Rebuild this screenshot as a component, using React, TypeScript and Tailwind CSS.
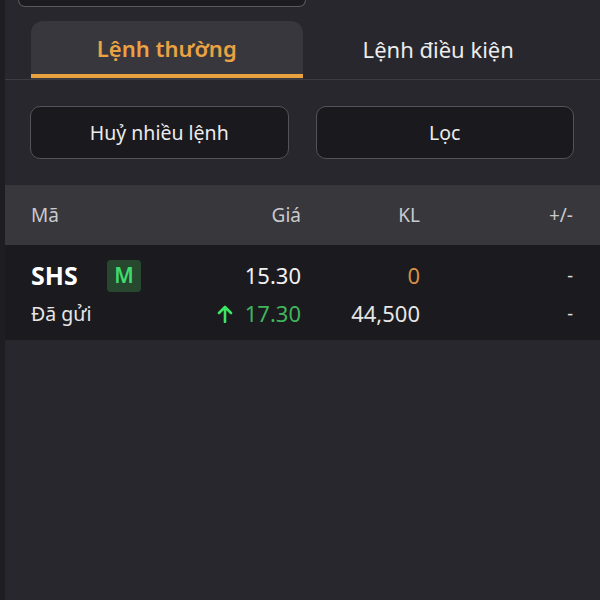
import React from "react";

export default function App() {
  const font = { fontFamily: '"Noto Sans", "Open Sans", sans-serif' };
  return (
    <div className="w-[600px] h-[600px] flex overflow-hidden bg-[#29272e]" style={font}>
      <div className="w-[5px] h-full bg-[#1e1d22]" />
      <div className="flex-1 flex flex-col">
        {/* top partial button */}
        <div className="ml-[13px] w-[288px] h-[7px] border-x border-b border-[#5a595f] rounded-b-[10px] bg-[#1c1b20]" />
        {/* tabs */}
        <div className="mt-[14px] flex border-b border-[#3d3c42] pl-[26px] pr-[26px]">
          <div className="flex-1 h-[58px] flex flex-col bg-[#38373d] rounded-t-[12px]">
            <div className="flex-1 flex items-center justify-center pt-[2px] text-[22px] font-semibold text-[#eaa243]">
              Lệnh thường
            </div>
            <div className="h-[4px] bg-[#e8a23f] mb-[1px]" />
          </div>
          <div className="flex-1 h-[58px] flex items-center justify-center text-[22px] text-[#ececec] pb-[2px]">
            Lệnh điều kiện
          </div>
        </div>
        {/* buttons */}
        <div className="mt-[26px] flex gap-[27px] pl-[25px] pr-[26px]">
          <div className="flex-1 h-[53px] rounded-[10px] border border-[#54535a] bg-[#1a191e] flex items-center justify-center text-[19.5px] text-[#ececec]">
            Huỷ nhiều lệnh
          </div>
          <div className="flex-1 h-[53px] rounded-[10px] border border-[#54535a] bg-[#1a191e] flex items-center justify-center text-[19.5px] text-[#ececec]">
            Lọc
          </div>
        </div>
        {/* header */}
        <div className="mt-[26px] h-[60px] bg-[#38373c] flex items-center text-[19px] text-[#cacace]">
          <div className="pl-[26px] w-[176px]">Mã</div>
          <div className="w-[120px] text-right">Giá</div>
          <div className="w-[119px] text-right">KL</div>
          <div className="w-[153px] text-right">+/-</div>
        </div>
        {/* data row */}
        <div className="h-[95px] bg-[#1b1a1f] flex flex-col justify-center pt-[4px]">
          <div className="flex items-center h-[38px]">
            <div className="pl-[26px] w-[176px] flex items-center">
              <span className="text-[25px] font-bold text-white w-[76px]">SHS</span>
              <span className="w-[34px] h-[32px] rounded-[4px] bg-[#27472f] text-[#3fdc6d] text-[21px] font-semibold flex items-center justify-center">M</span>
            </div>
            <div className="w-[120px] text-right text-[22px] text-[#f0f0f0]">15.30</div>
            <div className="w-[119px] text-right text-[22px] text-[#d98f43]">0</div>
            <div className="w-[153px] text-right text-[18px] text-[#e0e0e0]">-</div>
          </div>
          <div className="flex items-center h-[38px]">
            <div className="pl-[26px] w-[176px] text-[19.5px] text-[#e6e6e6]">Đã gửi</div>
            <div className="w-[120px] flex items-center justify-end gap-[12px] text-[22px] text-[#3fb55c]">
              <svg width="16" height="18" viewBox="0 0 16 18" fill="none">
                <path d="M8 17V2M2 8l6-6 6 6" stroke="#3ee562" strokeWidth="2.6" strokeLinecap="round" strokeLinejoin="round" />
              </svg>
              <span>17.30</span>
            </div>
            <div className="w-[119px] text-right text-[22px] text-[#e6e6e6]">44,500</div>
            <div className="w-[153px] text-right text-[18px] text-[#e0e0e0]">-</div>
          </div>
        </div>
      </div>
    </div>
  );
}
